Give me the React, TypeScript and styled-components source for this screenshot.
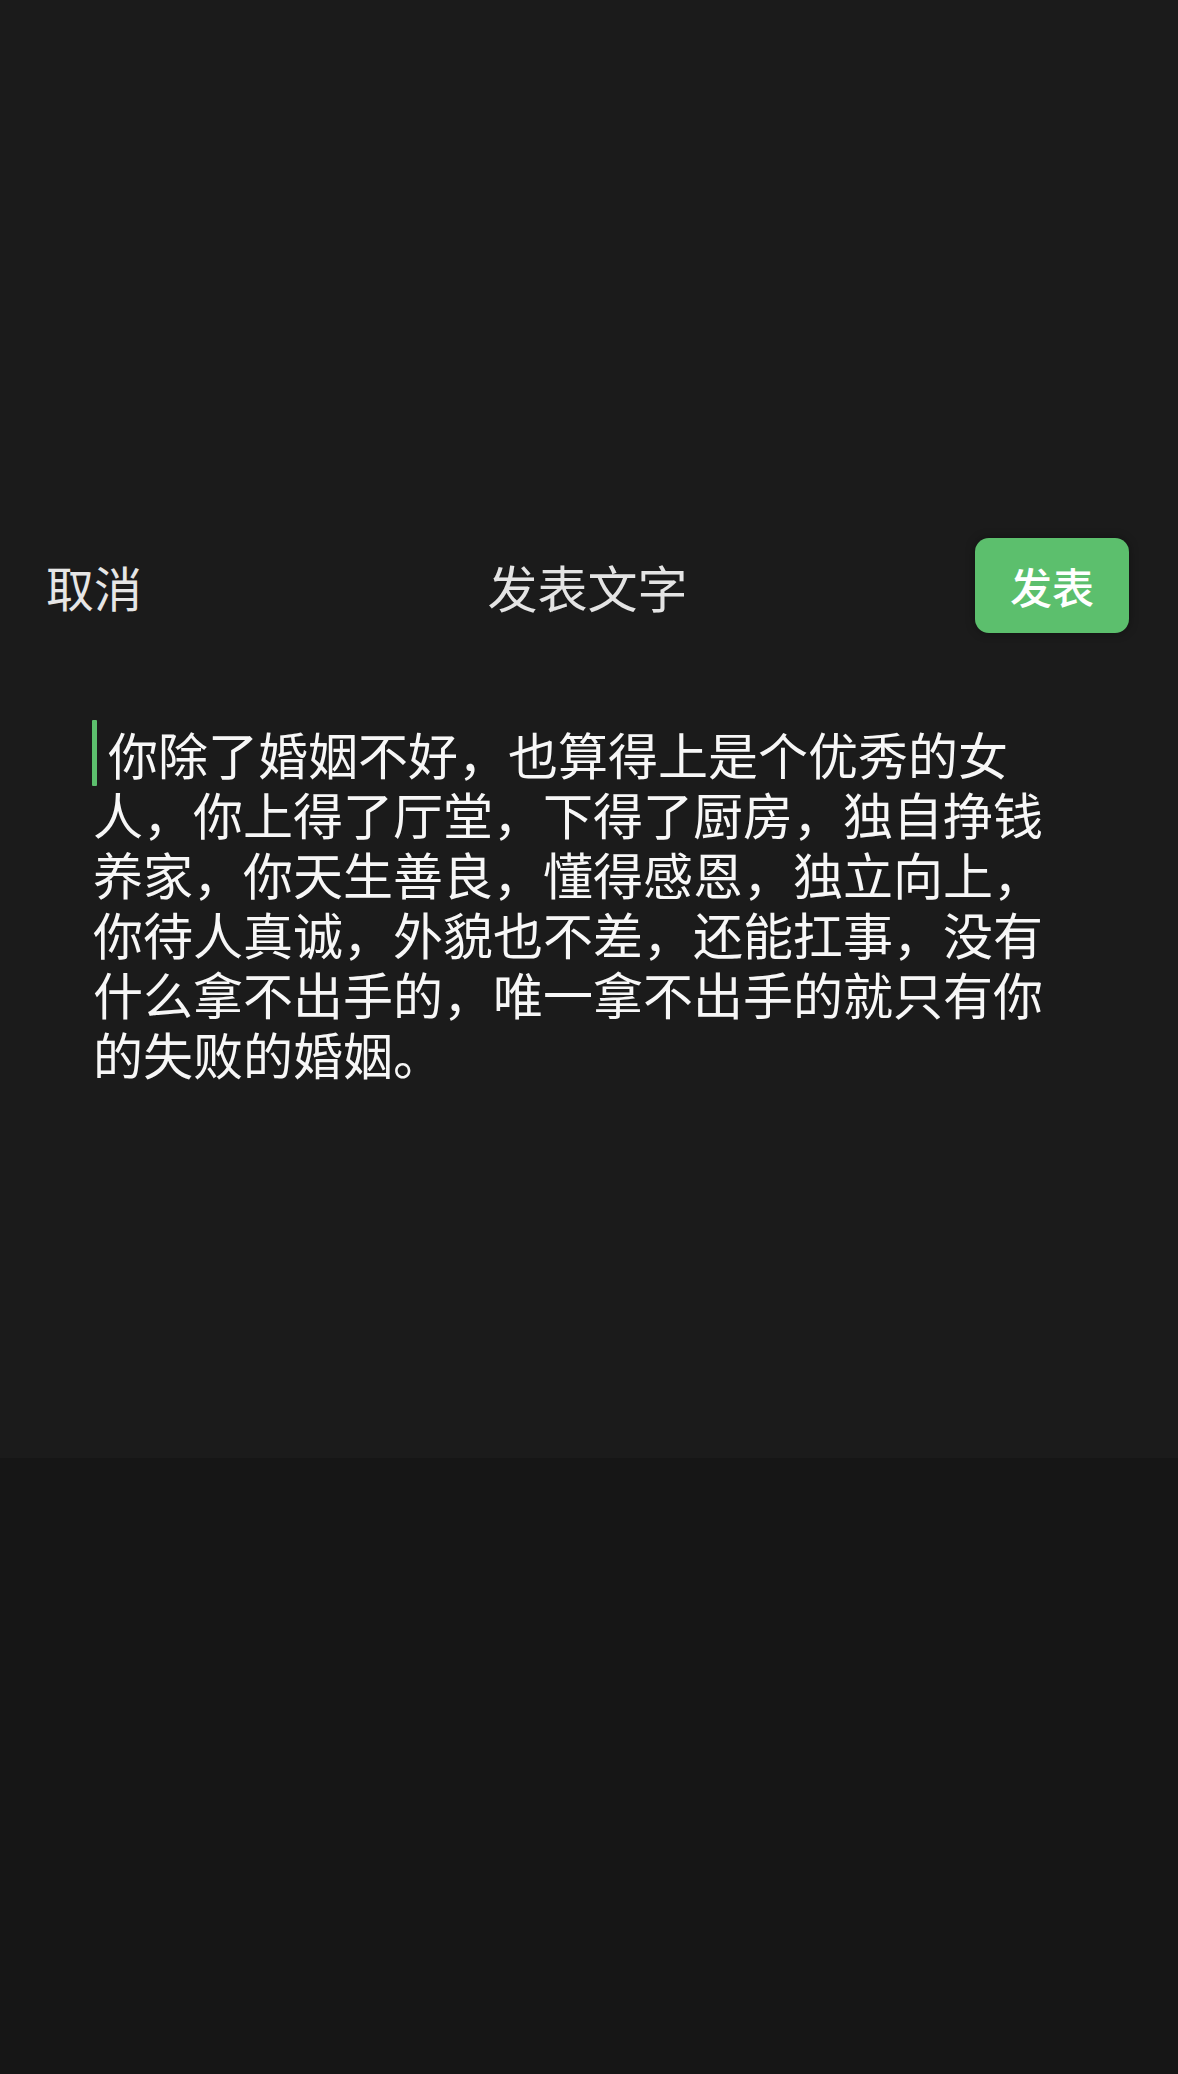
import React from "react";
import styled, { createGlobalStyle } from "styled-components";

const Global = createGlobalStyle`
  html, body {
    margin: 0;
    padding: 0;
    background: #161616;
  }
  body {
    font-family: "Noto Sans CJK SC", "Noto Sans", sans-serif;
  }
`;

const Page = styled.div`
  min-height: 2074px;
  display: flex;
  flex-direction: column;
  background: #161616;
`;

const Editor = styled.section`
  height: 1458px;
  background: #1b1b1b;
  padding-top: 538px;
  box-sizing: border-box;
  display: flex;
  flex-direction: column;
`;

const Header = styled.header`
  display: grid;
  grid-template-columns: 1fr auto 1fr;
  align-items: center;
  height: 95px;
  padding: 0 49px 0 46px;
`;

const Cancel = styled.span`
  justify-self: start;
  font-size: 48px;
  color: #e6e6e6;
  line-height: 1;
`;

const Title = styled.h1`
  margin: 0;
  font-size: 50px;
  font-weight: 400;
  color: #e4e4e4;
  line-height: 1;
`;

const PublishButton = styled.button`
  justify-self: end;
  width: 154px;
  height: 95px;
  border: none;
  border-radius: 14px;
  background: #5cbf6d;
  color: #ffffff;
  font-family: "Noto Sans CJK SC", "Noto Sans", sans-serif;
  font-size: 42px;
  font-weight: 500;
  line-height: 1;
  padding: 0;
  box-shadow: 0 0 10px rgba(0, 0, 0, 0.35);
`;

const Body = styled.div`
  margin-top: 90px;
  padding-left: 93px;
  width: 975px;
  font-size: 50px;
  line-height: 60px;
  color: #f7f7f7;
  text-spacing-trim: space-all;
`;

const Cursor = styled.span`
  display: inline-block;
  width: 5px;
  height: 66px;
  margin: -3px 11px -3px -1px;
  vertical-align: top;
  background: #5cbf6d;
  border-radius: 1px;
`;

const text =
  "你除了婚姻不好，也算得上是个优秀的女人，你上得了厅堂，下得了厨房，独自挣钱养家，你天生善良，懂得感恩，独立向上，你待人真诚，外貌也不差，还能扛事，没有什么拿不出手的，唯一拿不出手的就只有你的失败的婚姻。";

export default function App() {
  return (
    <Page>
      <Global />
      <Editor>
        <Header>
          <Cancel>取消</Cancel>
          <Title>发表文字</Title>
          <PublishButton>发表</PublishButton>
        </Header>
        <Body>
          <Cursor />
          {text}
        </Body>
      </Editor>
    </Page>
  );
}
